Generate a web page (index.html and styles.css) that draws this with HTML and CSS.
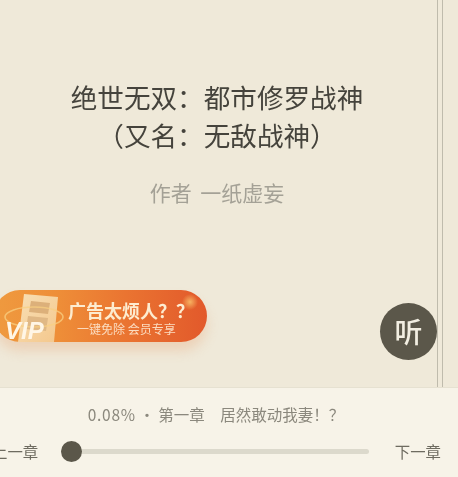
FILE: index.html
```html
<!DOCTYPE html>
<html lang="zh-CN">
<head>
<meta charset="utf-8">
<title>绝世无双</title>
<link rel="stylesheet" href="styles.css">
</head>
<body>
<div class="screen">
  <main class="page">
    <div class="edge-lines"></div>
    <h1 class="title">绝世无双&#xFF1A;都市修罗战神<br>&#xFF08;又名&#xFF1A;无敌战神&#xFF09;</h1>
    <p class="author">作者 一纸虚妄</p>
    <div class="ad">
      <div class="ad-art">
        <svg class="ad-book" viewBox="0 0 42 52" width="42" height="52">
          <defs>
            <linearGradient id="page" x1="0" y1="0" x2="1" y2="1">
              <stop offset="0" stop-color="#f8dfb4"/>
              <stop offset="1" stop-color="#f4c78c"/>
            </linearGradient>
          </defs>
          <path d="M7 4 L41 7 L37 52 L1 52 Z" fill="url(#page)"/>
          <path d="M14 11 L33 13 L31 24 L12 22 Z" fill="#dcb07a"/>
          <path d="M11 26 L31 28 L29 41 L9 39 Z" fill="#e0b885"/>
        </svg>
        <svg class="ad-ring" viewBox="0 0 62 26" width="62" height="26">
          <ellipse cx="31" cy="13" rx="29" ry="10" fill="none" stroke="#f8cf82" stroke-width="1.6" opacity=".75"/>
        </svg>
        <span class="ad-vip">VIP</span>
      </div>
      <div class="ad-text">
        <div class="ad-main">广告太烦人&#xFF1F;&#xFF1F;</div>
        <div class="ad-sub">一键免除 会员专享</div>
      </div>
    </div>
    <button class="listen">听</button>
  </main>
  <footer class="bar">
    <div class="progress"><span class="pct">0.08%</span> · 第一章&#x3000;居然敢动我妻&#xFF01;&#xFF1F;</div>
    <div class="controls">
      <span class="nav nav-prev">上一章</span>
      <div class="track"><span class="thumb"></span></div>
      <span class="nav">下一章</span>
    </div>
  </footer>
</div>
</body>
</html>
```
FILE: styles.css
```css
* { box-sizing: border-box; }
html, body { margin: 0; padding: 0; }
body {
  width: 458px;
  height: 477px;
  overflow: hidden;
  font-family: "Noto Sans CJK SC", "Liberation Sans", sans-serif;
  background: #efe9d9;
}
.screen {
  width: 458px;
  height: 477px;
  display: flex;
  flex-direction: column;
  overflow: hidden;
  filter: blur(0.35px);
}
.page {
  position: relative;
  height: 388px;
  flex: none;
  background: #efe9d9;
  padding-top: 78px;
  border-bottom: 1px solid #e6e1d1;
}
.edge-lines {
  position: absolute;
  top: 0;
  bottom: 0;
  left: 437px;
  width: 6px;
  border-left: 1px solid #bfbbac;
  border-right: 1px solid #bfbbac;
}
.title {
  margin: 0 0 0 -24px;
  width: 482px;
  text-align: center;
  font-size: 26.6px;
  line-height: 38px;
  font-weight: 400;
  color: #45433c;
}
.author {
  margin: 22px 0 0 -24px;
  width: 482px;
  text-align: center;
  font-size: 21px;
  line-height: 32px;
  word-spacing: 4px;
  color: #a4a196;
}
.ad {
  position: absolute;
  left: -6px;
  top: 290px;
  width: 213px;
  height: 52px;
  border-radius: 26px;
  display: flex;
  align-items: center;
  background:
    radial-gradient(circle at 196px 12px, rgba(255, 214, 120, 0.7) 0, rgba(255, 214, 120, 0) 8px),
    linear-gradient(90deg, #ef9a3f 0%, #ee8e38 30%, #ea7431 62%, #e2592b 100%);
  box-shadow: 0 9px 12px rgba(232, 160, 110, 0.3);
}
.ad-art {
  position: relative;
  width: 74px;
  height: 52px;
  flex: none;
}
.ad-book {
  position: absolute;
  left: 23px;
  top: 0;
}
.ad-ring {
  position: absolute;
  left: 9px;
  top: 14px;
}
.ad-vip {
  position: absolute;
  left: 11px;
  top: 30px;
  font-family: "Liberation Sans", sans-serif;
  font-size: 24px;
  line-height: 22px;
  font-weight: 700;
  font-style: italic;
  color: #fff6e6;
}
.ad-text {
  color: #fdecd0;
  padding-top: 2px;
}
.ad-main {
  font-size: 18px;
  line-height: 22px;
  font-weight: 700;
  white-space: nowrap;
}
.ad-sub {
  font-size: 12px;
  line-height: 15px;
  margin: 0 0 0 9px;
  white-space: nowrap;
  color: #fbdcc0;
}
.listen {
  position: absolute;
  left: 380px;
  top: 303px;
  width: 57px;
  height: 57px;
  padding: 0;
  border: 0;
  border-radius: 50%;
  background: #5b574a;
  color: #f2eee2;
  font-family: inherit;
  font-size: 28px;
  font-weight: 500;
  line-height: 57px;
}
.bar {
  flex: 1;
  background: #f7f3e8;
  padding-top: 15px;
}
.progress {
  text-align: center;
  margin-right: 26px;
  font-size: 15.5px;
  line-height: 22px;
  color: #8b887d;
  white-space: nowrap;
}
.pct { letter-spacing: 0.7px; }
.controls {
  display: flex;
  align-items: center;
  margin-top: 14px;
  margin-left: -8px;
  padding-right: 17px;
}
.nav {
  font-size: 15.4px;
  line-height: 24px;
  color: #6e6b60;
  white-space: nowrap;
}
.track {
  position: relative;
  flex: 1;
  height: 5px;
  margin: 0 26px 0 23px;
  border-radius: 3px;
  background: #dcd9cc;
}
.thumb {
  position: absolute;
  left: 0;
  top: -8px;
  width: 21px;
  height: 21px;
  border-radius: 50%;
  background: #5b574a;
}
```
